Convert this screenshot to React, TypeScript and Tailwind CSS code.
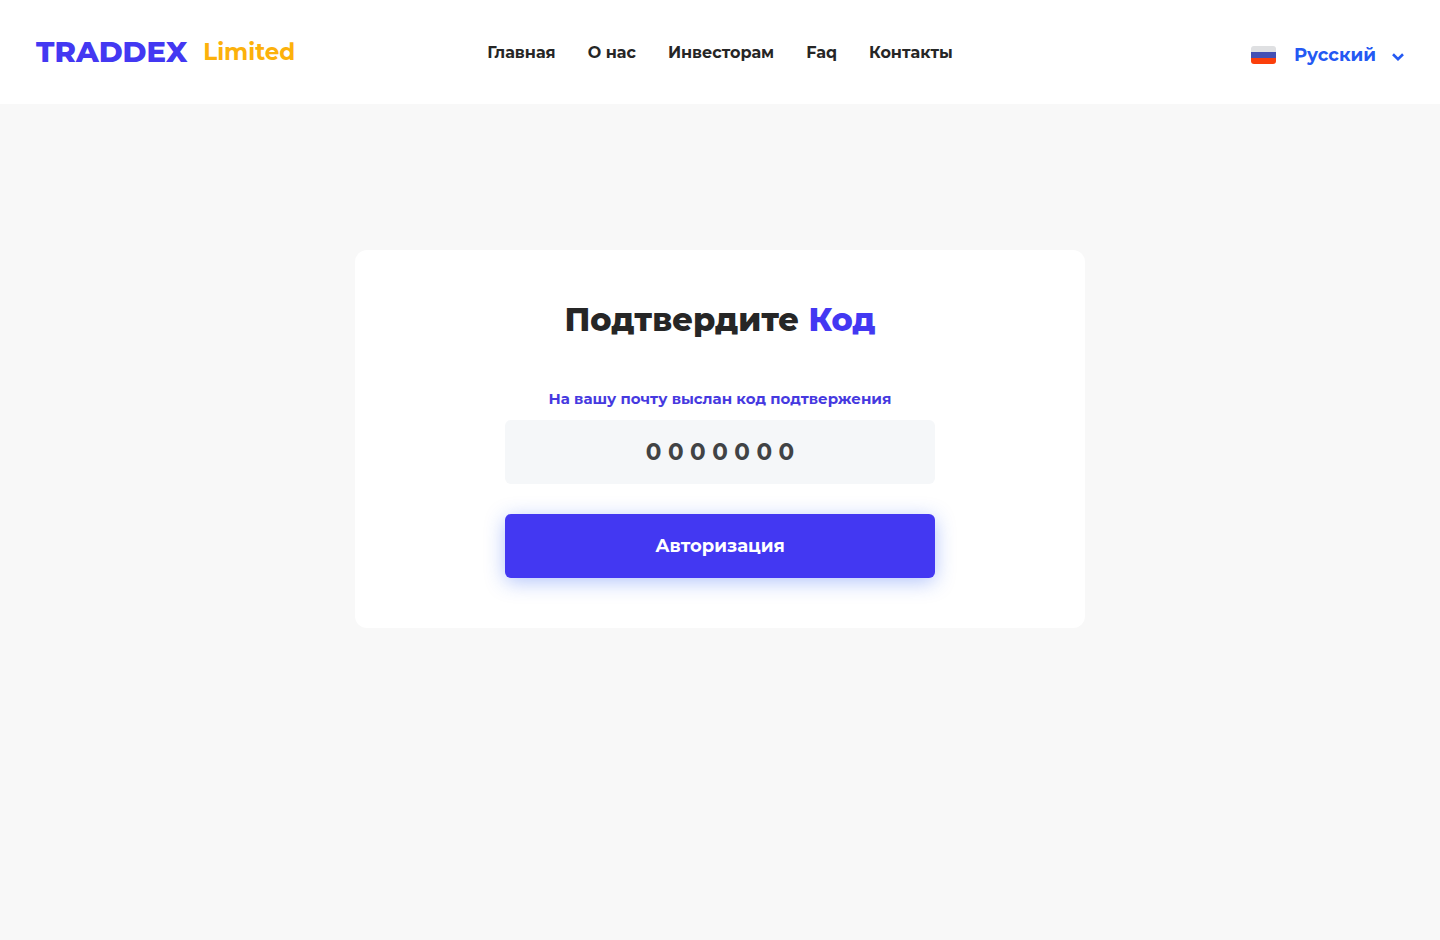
const navLinks = ["Главная", "О нас", "Инвесторам", "Faq", "Контакты"];

function RussianFlag() {
  return (
    <svg width="25" height="18" viewBox="0 0 25 18" aria-hidden="true" className="shrink-0">
      <path d="M0 6V3a3 3 0 0 1 3-3h19a3 3 0 0 1 3 3v3Z" fill="#dfe0e2" />
      <path d="M0 6h25v6H0Z" fill="#4450b4" />
      <path d="M0 12h25v3a3 3 0 0 1-3 3H3a3 3 0 0 1-3-3Z" fill="#fb3f0b" />
    </svg>
  );
}

function Header() {
  return (
    <header className="bg-white px-9 h-26 grid grid-cols-[1fr_auto_1fr] items-center">
      <a href="#" className="flex items-center gap-4 leading-8">
        <span className="text-[29px] font-extrabold text-[#4338f2]">TRADDEX</span>
        <span className="text-[23px] font-bold text-[#fcb10b]">Limited</span>
      </a>

      <nav className="flex items-center gap-8 pt-0.5">
        {navLinks.map((label) => (
          <a key={label} href="#" className="text-base font-bold text-[#262626] hover:text-[#4338f2]">
            {label}
          </a>
        ))}
      </nav>

      <div className="flex items-center justify-end gap-[18px] pt-1.5">
        <RussianFlag />
        <div className="relative flex items-center">
          <select
            aria-label="Язык"
            defaultValue="ru"
            className="appearance-none field-sizing-content bg-transparent pr-7 text-lg font-bold text-[#2459f3] cursor-pointer outline-none"
          >
            <option value="ru">Русский</option>
            <option value="en">English</option>
          </select>
          <svg
            width="12"
            height="8"
            viewBox="0 0 12 8"
            fill="none"
            aria-hidden="true"
            className="absolute right-0 top-3 pointer-events-none"
          >
            <path d="m1 1.3 5 4.9 5-4.9" stroke="#2459f3" strokeWidth="2.6" />
          </svg>
        </div>
      </div>
    </header>
  );
}

export default function App() {
  return (
    <div className="min-h-screen bg-[#f8f8f8] font-['Montserrat',Inter,sans-serif]">
      <Header />

      <main className="px-5 pt-[146px] pb-20">
        <section className="mx-auto w-full max-w-[730px] rounded-xl bg-white px-5 py-[50px]">
          <h1 className="text-center text-[32px] leading-10 font-extrabold text-[#262626]">
            Подтвердите <span className="text-[#4338f2]">Код</span>
          </h1>

          <form className="mx-auto mt-12 w-full max-w-[430px]" onSubmit={(e) => e.preventDefault()}>
            <label htmlFor="code" className="block text-center text-[15px] leading-[22px] font-bold text-[#4639e0]">
              На вашу почту выслан код подтвержения
            </label>
            <input
              id="code"
              type="text"
              inputMode="numeric"
              placeholder="0 0 0 0 0 0 0"
              className="mt-2.5 block h-16 w-full rounded-md bg-[#f5f7f9] text-center text-[23px] font-bold text-[#414345] placeholder:text-[#414345] outline-none"
            />
            <button
              type="submit"
              className="mt-[30px] block h-16 w-full rounded-md bg-[#4338f2] text-lg font-bold text-white shadow-[0_4px_20px_rgba(36,89,243,0.35)] cursor-pointer"
            >
              Авторизация
            </button>
          </form>
        </section>
      </main>
    </div>
  );
}
